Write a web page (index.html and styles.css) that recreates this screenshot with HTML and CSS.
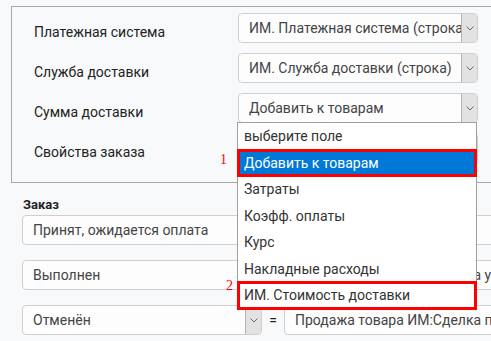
FILE: index.html
```html
<!DOCTYPE html>
<html lang="ru">
  <head>
    <meta charset="UTF-8">
    <meta name="viewport" content="width=device-width, initial-scale=1.0">
    <title>Сопоставление полей</title>
    <link rel="stylesheet" href="styles.css">
  </head>
  <body>
    <main class="page">
      <section class="props-panel">
        <div class="prop-row">
          <span class="prop-label">Платежная система</span>
          <div class="field">
            <span class="field-text">ИМ. Платежная система (строка)</span>
            <span class="field-arrow"><svg width="8" height="5" viewBox="0 0 8 5"><path d="M0.5 0.5 L4 4 L7.5 0.5" fill="none" stroke="#666" stroke-width="1"/></svg></span>
          </div>
        </div>
        <div class="prop-row">
          <span class="prop-label">Служба доставки</span>
          <div class="field">
            <span class="field-text">ИМ. Служба доставки (строка)</span>
            <span class="field-arrow"><svg width="8" height="5" viewBox="0 0 8 5"><path d="M0.5 0.5 L4 4 L7.5 0.5" fill="none" stroke="#666" stroke-width="1"/></svg></span>
          </div>
        </div>
        <div class="prop-row">
          <span class="prop-label">Сумма доставки</span>
          <div class="field">
            <span class="field-text">Добавить к товарам</span>
            <span class="field-arrow"><svg width="8" height="5" viewBox="0 0 8 5"><path d="M0.5 0.5 L4 4 L7.5 0.5" fill="none" stroke="#666" stroke-width="1"/></svg></span>
          </div>
        </div>
        <div class="prop-row">
          <span class="prop-label">Свойства заказа</span>
          <div class="field">
            <span class="field-text">выберите поле</span>
            <span class="field-arrow"></span>
          </div>
        </div>
      </section>

      <section class="order-block">
        <div class="order-title">Заказ</div>
        <div class="status-row">
          <div class="field">
            <span class="field-text">Принят, ожидается оплата</span>
            <span class="field-arrow"></span>
          </div>
          <span class="eq">=</span>
          <div class="field wide">
            <span class="field-text">Продажа товара ИМ:Новая</span>
          </div>
        </div>
        <div class="status-row">
          <div class="field">
            <span class="field-text">Выполнен</span>
            <span class="field-arrow"></span>
          </div>
          <span class="eq">=</span>
          <div class="field wide">
            <span class="field-text">Продажа товара ИМ:Сделка успешна</span>
          </div>
        </div>
        <div class="status-row">
          <div class="field">
            <span class="field-text">Отменён</span>
            <span class="field-arrow"><svg width="8" height="5" viewBox="0 0 8 5"><path d="M0.5 0.5 L4 4 L7.5 0.5" fill="none" stroke="#666" stroke-width="1"/></svg></span>
          </div>
          <span class="eq">=</span>
          <div class="field wide">
            <span class="field-text">Продажа товара ИМ:Сделка провалена</span>
          </div>
        </div>
      </section>

      <!-- open list of "Сумма доставки" -->
      <ul class="dropdown">
        <li>выберите поле</li>
        <li class="selected marked">Добавить к товарам</li>
        <li>Затраты</li>
        <li>Коэфф. оплаты</li>
        <li>Курс</li>
        <li>Накладные расходы</li>
        <li class="marked">ИМ. Стоимость доставки</li>
      </ul>

      <span class="marker marker-1">1</span>
      <span class="marker marker-2">2</span>
    </main>
  </body>
</html>
```

FILE: styles.css
```css
html, body {
  margin: 0;
  padding: 0;
  background-color: #f8f9fa;
  overflow: hidden;
}

body {
  font-family: Roboto, sans-serif;
  font-size: 14px;
  color: #222222;
}

.page {
  position: relative;
  width: 491px;
  height: 341px;
  padding-top: 6px;
  box-sizing: border-box;
  overflow: hidden;
}

.props-panel {
  margin-left: 11px;
  width: 520px;
  border: 1px solid #a8a8a8;
  padding: 6px 0 19px 22px;
  display: flex;
  flex-direction: column;
  gap: 10px;
}

.prop-row {
  display: flex;
  align-items: flex-start;
}

.prop-label {
  width: 204px;
  flex-shrink: 0;
  padding-top: 9px;
  line-height: 20px;
}

.field {
  display: flex;
  align-items: stretch;
  flex-shrink: 0;
  width: 238px;
  height: 28px;
  border: 1px solid #cfcfcf;
  border-radius: 4px;
  background-color: #fdfdfd;
  overflow: hidden;
  color: #444444;
}

.field-text {
  flex: 1;
  padding-left: 10px;
  line-height: 28px;
  white-space: nowrap;
  overflow: hidden;
}

.field-arrow {
  width: 15px;
  display: flex;
  align-items: center;
  justify-content: center;
  background-color: #e2e2e2;
  border-left: 1px solid #b4b4b4;
}

.order-block {
  padding: 13px 0 0 22px;
}

.order-title {
  font-weight: bold;
  font-size: 13px;
  line-height: 18px;
  margin-left: 1px;
  margin-bottom: 1px;
}

.status-row {
  display: flex;
  align-items: center;
  margin-bottom: 15px;
}

.eq {
  width: 22px;
  flex-shrink: 0;
  text-align: center;
  color: #222222;
}

.field.wide {
  width: 260px;
}

.dropdown {
  position: absolute;
  left: 237px;
  top: 122px;
  width: 238px;
  margin: 0;
  padding: 0;
  list-style: none;
  background-color: #ffffff;
  border: 1px solid #a0a0a0;
  color: #333333;
}

.dropdown li {
  height: 26.5px;
  line-height: 26px;
  padding-left: 6px;
}

.dropdown .selected {
  background-color: #0078d7;
  color: #ffffff;
}

.dropdown .marked {
  outline: 3px solid #ff0000;
  outline-offset: -2px;
}

.marker {
  position: absolute;
  font-family: "Liberation Serif", serif;
  font-size: 14px;
  color: #ff0000;
}

.marker-1 {
  left: 220px;
  top: 152px;
}

.marker-2 {
  left: 226px;
  top: 278px;
}
```
